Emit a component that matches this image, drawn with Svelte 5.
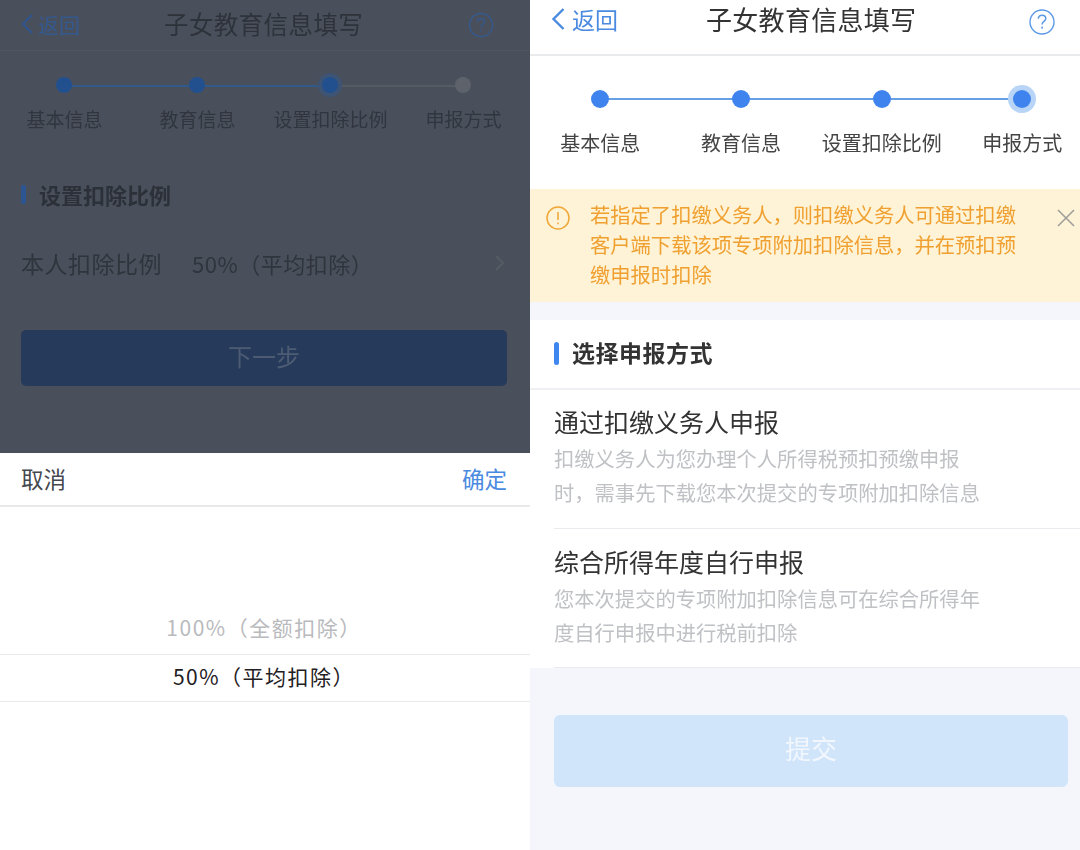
<script>
const leftSteps = [
  { label: "基本信息", state: "done" },
  { label: "教育信息", state: "done" },
  { label: "设置扣除比例", state: "current" },
  { label: "申报方式", state: "todo" }
];
const rightSteps = [
  { label: "基本信息", state: "done" },
  { label: "教育信息", state: "done" },
  { label: "设置扣除比例", state: "done" },
  { label: "申报方式", state: "current" }
];
const methods = [
  {
    title: "通过扣缴义务人申报",
    desc: ["扣缴义务人为您办理个人所得税预扣预缴申报", "时，需事先下载您本次提交的专项附加扣除信息"]
  },
  {
    title: "综合所得年度自行申报",
    desc: ["您本次提交的专项附加扣除信息可在综合所得年", "度自行申报中进行税前扣除"]
  }
];
</script>

<div class="page">
  <div class="left">
    <div class="dimmed">
      <div class="l-header">
        <div class="l-back">
          <svg width="14" height="22" viewBox="0 0 14 22"><path d="M12 2 3 11l9 9" fill="none" stroke="#2f568f" stroke-width="2.2"/></svg>
          <span>返回</span>
        </div>
        <div class="l-title">子女教育信息填写</div>
        <svg class="l-help" width="26" height="26" viewBox="0 0 26 26">
          <circle cx="13" cy="13" r="11.5" fill="none" stroke="#34598f" stroke-width="1.4"/>
          <path d="M9.5 10c0-2 1.5-3.2 3.5-3.2s3.5 1.3 3.5 3c0 2.5-3.5 2.7-3.5 5.5M13 17.5v1.8" fill="none" stroke="#34598f" stroke-width="1.4"/>
        </svg>
      </div>
      <div class="l-steps">
        {#each leftSteps as step, i}
          <div class="l-step {step.state}">
            {#if i < 3}<div class="l-line" class:off={i === 2}></div>{/if}
            <div class="l-dot"></div>
            <div class="l-label">{step.label}</div>
          </div>
        {/each}
      </div>
      <div class="l-section"><i></i><span>设置扣除比例</span></div>
      <div class="l-row">
        <span class="l-row-name">本人扣除比例</span>
        <span class="l-row-value">50%（平均扣除）</span>
        <svg width="12" height="18" viewBox="0 0 12 18"><path d="M2 2l7 7-7 7" fill="none" stroke="#565b64" stroke-width="2"/></svg>
      </div>
      <div class="l-next">下一步</div>
    </div>
    <div class="sheet">
      <div class="sheet-head">
        <span class="cancel">取消</span>
        <span class="ok">确定</span>
      </div>
      <div class="picker">
        <div class="opt muted">100%（全额扣除）</div>
        <div class="opt picked">50%（平均扣除）</div>
      </div>
    </div>
  </div>

  <div class="right">
    <div class="r-header">
      <div class="r-back">
        <svg width="16" height="26" viewBox="0 0 16 26"><path d="M13.5 3 3.5 13l10 10" fill="none" stroke="#4a8ae0" stroke-width="2.4"/></svg>
        <span>返回</span>
      </div>
      <div class="r-title">子女教育信息填写</div>
      <svg class="r-help" width="28" height="28" viewBox="0 0 28 28">
        <circle cx="14" cy="14" r="12" fill="none" stroke="#5c9ae6" stroke-width="1.4"/>
        <path d="M10.3 10.8c0-2.2 1.7-3.6 3.8-3.6s3.7 1.4 3.7 3.3c0 2.8-3.7 3-3.7 6M14.1 18.5v2.2" fill="none" stroke="#5c9ae6" stroke-width="1.5"/>
      </svg>
    </div>
    <div class="r-steps">
      {#each rightSteps as step, i}
        <div class="r-step {step.state}">
          {#if i < 3}<div class="r-line"></div>{/if}
          <div class="r-dot"></div>
          <div class="r-label">{step.label}</div>
        </div>
      {/each}
    </div>
    <div class="notice">
      <svg class="notice-icon" width="26" height="26" viewBox="0 0 26 26">
        <circle cx="13" cy="13" r="11" fill="none" stroke="#f0a738" stroke-width="1.5"/>
        <path d="M13 7v8M13 17.5v1.8" fill="none" stroke="#f0a738" stroke-width="1.5"/>
      </svg>
      <p>若指定了扣缴义务人，则扣缴义务人可通过扣缴客户端下载该项专项附加扣除信息，并在预扣预缴申报时扣除</p>
      <svg class="notice-close" width="20" height="20" viewBox="0 0 20 20">
        <path d="M2 2l16 16M18 2 2 18" fill="none" stroke="#9c9c98" stroke-width="1.5"/>
      </svg>
    </div>
    <div class="r-section"><i></i><span>选择申报方式</span></div>
    <div class="methods">
      {#each methods as m}
        <div class="method">
          <div class="method-title">{m.title}</div>
          {#each m.desc as line}
            <div class="method-desc">{line}</div>
          {/each}
        </div>
      {/each}
    </div>
    <div class="submit">提交</div>
  </div>
</div>

<style>
:global(body) {
  margin: 0;
  background: #fff;
}

.page {
  display: grid;
  grid-template-columns: 530px 550px;
  width: 1080px;
  height: 850px;
  overflow: hidden;
  font-family: "Noto Sans CJK SC", "Noto Sans", sans-serif;
  text-spacing-trim: space-all;
}

/* left phone */
.left {
  display: flex;
  flex-direction: column;
  height: 850px;
}
.dimmed {
  height: 453px;
  background: #4a505b;
  color: #2f343d;
  overflow: hidden;
  filter: blur(0.5px);
}
.l-header {
  display: flex;
  align-items: center;
  height: 47px;
  padding: 0 36px 3px 20px;
  border-bottom: 1px solid #50565f;
}
.l-back {
  display: flex;
  align-items: center;
  gap: 4px;
  width: 144px;
  color: #34598f;
  font-size: 21px;
}
.l-title {
  flex: 1;
  font-size: 24.5px;
  letter-spacing: 0.4px;
  color: #2e323a;
}
.l-help {
  margin-top: 3px;
}
.l-steps {
  display: grid;
  grid-template-columns: repeat(4, 133px);
  margin-left: -3px;
  padding-top: 26px;
}
.l-step {
  position: relative;
  display: flex;
  flex-direction: column;
  align-items: center;
}
.l-dot {
  position: relative;
  width: 16px;
  height: 16px;
  border-radius: 50%;
  background: #22508f;
}
.l-step.current .l-dot {
  box-shadow: 0 0 0 4px #3d5475;
}
.l-step.todo .l-dot {
  background: #5d626b;
}
.l-line {
  position: absolute;
  top: 8px;
  left: 50%;
  width: 133px;
  height: 2px;
  background: #2f5a8a;
}
.l-line.off {
  background: #555a63;
}
.l-label {
  margin-top: 12px;
  padding-left: 2px;
  font-size: 19px;
  line-height: 28px;
  white-space: nowrap;
  color: #30353f;
}
.l-section {
  display: flex;
  align-items: center;
  gap: 13px;
  margin: 45px 0 0 21px;
  font-size: 22px;
  font-weight: 700;
  line-height: 32px;
  color: #2c3039;
}
.l-section i {
  width: 5px;
  height: 19px;
  border-radius: 2px;
  background: #2c5592;
}
.l-row {
  display: flex;
  align-items: center;
  margin-top: 37px;
  padding: 0 24px 0 21px;
  height: 32px;
  font-size: 22px;
}
.l-row-name {
  width: 171px;
  font-size: 23px;
  letter-spacing: 0.5px;
}
.l-row-value {
  flex: 1;
  letter-spacing: 0.5px;
}
.l-next {
  display: flex;
  align-items: center;
  justify-content: center;
  height: 50px;
  padding-bottom: 6px;
  margin: 51px 23px 0 21px;
  border-radius: 5px;
  background: #263a5b;
  color: #4d5c73;
  font-size: 24px;
}

.sheet {
  flex: 1;
  background: #fff;
}
.sheet-head {
  display: flex;
  align-items: center;
  justify-content: space-between;
  height: 49px;
  padding: 0 23px 3px 21px;
  border-bottom: 2px solid #e8e9eb;
  font-size: 22.5px;
}
.cancel {
  color: #44474d;
}
.ok {
  color: #4a8ae0;
}
.picker {
  padding-top: 99px;
}
.opt {
  display: flex;
  align-items: center;
  justify-content: center;
  width: 530px;
  padding-right: 2px;
  box-sizing: border-box;
  font-size: 21px;
  letter-spacing: 1.5px;
}
.opt.muted {
  height: 48px;
  padding-bottom: 6px;
  color: #b9babd;
}
.opt.picked {
  height: 48px;
  padding-bottom: 4px;
  border-top: 1px solid #e8e9eb;
  border-bottom: 1px solid #e8e9eb;
  color: #1f2023;
}

/* right phone */
.right {
  display: flex;
  flex-direction: column;
  height: 850px;
  background: #f5f6fb;
  overflow: hidden;
  filter: blur(0.3px);
}
.r-header {
  display: flex;
  align-items: center;
  flex-shrink: 0;
  height: 56px;
  padding: 0 24px 16px 20px;
  box-sizing: border-box;
  background: #fff;
  border-bottom: 2px solid #e9eaec;
}
.r-back {
  display: flex;
  align-items: center;
  gap: 6px;
  width: 156px;
  color: #4a8ae0;
  font-size: 23px;
}
.r-title {
  flex: 1;
  margin-bottom: 2px;
  font-size: 26px;
  letter-spacing: 0.3px;
  color: #333;
}
.r-help {
  margin-top: 6px;
}
.r-steps {
  display: grid;
  grid-template-columns: repeat(4, 140.67px);
  flex-shrink: 0;
  height: 133px;
  padding-top: 34px;
  box-sizing: border-box;
  background: #fff;
}
.r-step {
  position: relative;
  display: flex;
  flex-direction: column;
  align-items: center;
}
.r-dot {
  position: relative;
  width: 18px;
  height: 18px;
  border-radius: 50%;
  background: #3f84ee;
}
.r-step.current .r-dot {
  box-shadow: 0 0 0 5px #b8d5f8;
}
.r-line {
  position: absolute;
  top: 8px;
  left: 50%;
  width: 140.67px;
  height: 2px;
  background: #68a0e6;
}
.r-label {
  margin-top: 20px;
  font-size: 20px;
  line-height: 30px;
  white-space: nowrap;
  color: #444;
}
.notice {
  position: relative;
  flex-shrink: 0;
  height: 113px;
  padding: 10px 62px 0 60px;
  box-sizing: border-box;
  background: #fef3d6;
}
.notice p {
  margin: 0;
  font-size: 20.3px;
  line-height: 30px;
  color: #f0a030;
}
.notice-icon {
  position: absolute;
  left: 15px;
  top: 16px;
}
.notice-close {
  position: absolute;
  left: 526px;
  top: 19px;
}
.r-section {
  display: flex;
  align-items: center;
  flex-shrink: 0;
  gap: 13px;
  height: 68px;
  margin-top: 18px;
  padding-left: 24px;
  background: #fff;
  font-size: 23px;
  font-weight: 700;
  letter-spacing: 0.5px;
  color: #333;
  border-bottom: 2px solid #eff0f3;
}
.r-section i {
  width: 5px;
  height: 23px;
  margin-top: -2px;
  border-radius: 3px;
  background: #3f87f0;
}
.r-section span {
  padding-bottom: 4px;
}
.methods {
  flex-shrink: 0;
  background: #fff;
  padding-left: 24px;
}
.method {
  height: 139px;
  padding-top: 12px;
  box-sizing: border-box;
  border-bottom: 1px solid #e9eaed;
}
.method:last-child {
  padding-top: 13px;
}
.method-title {
  font-size: 25px;
  line-height: 39px;
  color: #333;
}
.method-desc {
  font-size: 20.3px;
  line-height: 34px;
  white-space: nowrap;
  color: #bfc1c5;
}
.submit {
  display: flex;
  align-items: center;
  justify-content: center;
  flex-shrink: 0;
  height: 65px;
  padding-bottom: 7px;
  margin: 47px 12px 0 24px;
  border-radius: 6px;
  background: #d0e4fa;
  color: #f2f7fd;
  font-size: 26px;
}
</style>
